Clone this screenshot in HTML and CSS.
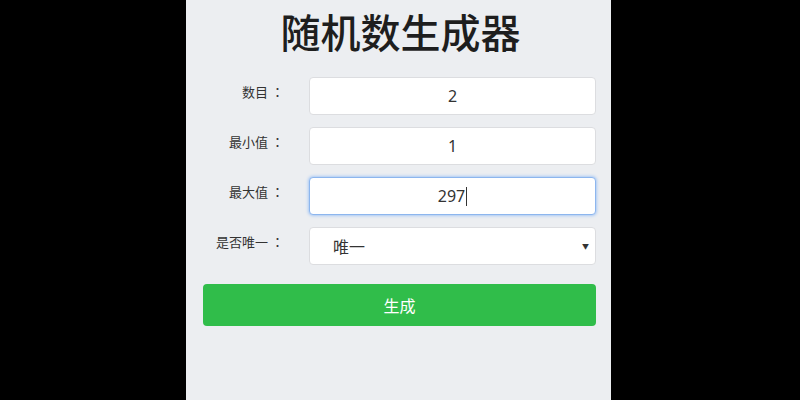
FILE: index.html
```html
<!DOCTYPE html>
<html lang="zh-CN">
<head>
<meta charset="utf-8">
<title>随机数生成器</title>
<link rel="stylesheet" href="styles.css">
</head>
<body>
<div class="panel">
  <h1 class="title">随机数生成器</h1>
  <div class="form">
    <label class="label">数目<span class="colon">：</span></label>
    <div class="field">2</div>
    <label class="label">最小值<span class="colon">：</span></label>
    <div class="field">1</div>
    <label class="label">最大值<span class="colon">：</span></label>
    <div class="field focus">297<span class="caret"></span></div>
    <label class="label">是否唯一<span class="colon">：</span></label>
    <div class="field select"><span>唯一</span><span class="arrow">▼</span></div>
  </div>
  <button class="btn">生成</button>
</div>
</body>
</html>
```
FILE: styles.css
```css
html, body {
  margin: 0;
  padding: 0;
  background: #000;
  height: 100%;
}
body {
  font-family: "Noto Sans CJK SC", "Noto Sans", sans-serif;
  color: #333;
}
.panel {
  width: 425px;
  height: 400px;
  margin-left: 186px;
  background: #eceef1;
  box-sizing: border-box;
  padding: 7px 15px 0 17px;
}
.title {
  margin: 0;
  font-size: 40px;
  line-height: 48px;
  font-weight: 500;
  color: #1e1e1e;
  text-align: center;
  padding-left: 2px;
}
.form {
  margin-top: 22px;
  display: grid;
  grid-template-columns: 81px 1fr;
  column-gap: 25px;
  row-gap: 12px;
}
.label {
  font-family: "Noto Sans CJK SC", sans-serif;
  font-size: 13px;
  text-align: right;
  align-self: center;
  color: #333;
  line-height: 20px;
  padding-bottom: 8px;
}
.colon {
  font-family: "Noto Sans CJK TC", sans-serif;
  font-feature-settings: "locl" 0;
  margin-left: 3px;
}
.field {
  height: 38px;
  box-sizing: border-box;
  background: #fff;
  border: 1px solid #dcdde0;
  border-radius: 4px;
  display: flex;
  align-items: center;
  justify-content: center;
  font-size: 16px;
  color: #333;
  font-family: "Noto Sans", "Noto Sans CJK SC", sans-serif;
}
.field.focus {
  border: 1px solid #8db6ee;
  box-shadow: 0 0 3px 1px #a9c9f5;
}
.caret {
  display: inline-block;
  width: 1px;
  height: 19px;
  background: #333;
  margin-left: 1px;
}
.field.select {
  justify-content: space-between;
  padding: 0 6px 0 23px;
  font-family: "Noto Sans CJK SC", sans-serif;
}
.arrow {
  font-size: 7px;
  color: #333;
}
.btn {
  display: block;
  width: 100%;
  margin-top: 19px;
  height: 42px;
  border: none;
  border-radius: 4px;
  background: #30bd4a;
  color: #fff;
  font-family: "Noto Sans CJK SC", sans-serif;
  font-size: 16px;
}
```
